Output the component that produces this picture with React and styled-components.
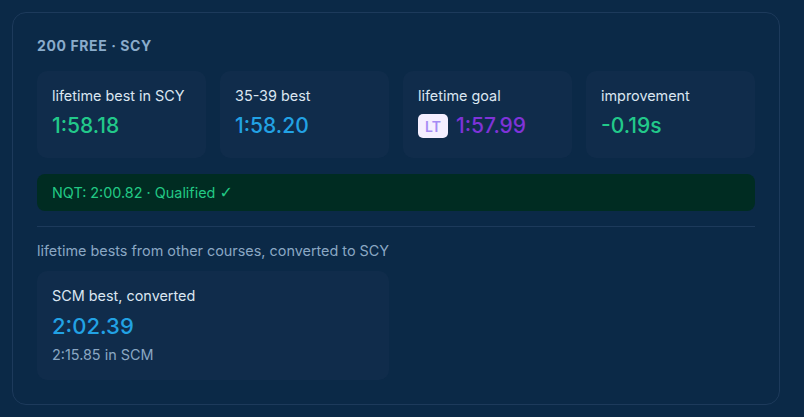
import React from "react";
import styled, { createGlobalStyle } from "styled-components";

const GlobalStyle = createGlobalStyle`
  body {
    margin: 0;
    background: #0b2947;
    font-family: Inter, "Noto Sans", sans-serif;
  }
`;

const stats = [
  { label: "lifetime best in SCY", value: "1:58.18", color: "#22c98a" },
  { label: "35-39 best", value: "1:58.20", color: "#22a2e4" },
  { label: "lifetime goal", value: "1:57.99", color: "#7f33d8", badge: "LT" },
  { label: "improvement", value: "-0.19s", color: "#22c98a" },
];

const App = () => {
  return (
    <>
      <GlobalStyle />
      <Panel>
        <Title>200 FREE · SCY</Title>
        <StatGrid>
          {stats.map((s) => (
            <StatCard key={s.label}>
              <Label>{s.label}</Label>
              <ValueRow>
                {s.badge && <Badge>{s.badge}</Badge>}
                <Value color={s.color}>{s.value}</Value>
              </ValueRow>
            </StatCard>
          ))}
        </StatGrid>
        <Qualified>
          NQT: 2:00.82 · Qualified <Check>✓</Check>
        </Qualified>
        <Divider />
        <SubTitle>lifetime bests from other courses, converted to SCY</SubTitle>
        <StatGrid>
          <StatCard $span={2} $tall>
            <Label>SCM best, converted</Label>
            <Value color="#22a2e4" $big>2:02.39</Value>
            <Note>2:15.85 in SCM</Note>
          </StatCard>
        </StatGrid>
      </Panel>
    </>
  );
};

const Panel = styled.div`
  margin: 12px;
  width: 768px;
  box-sizing: border-box;
  padding: 24px;
  border: 1px solid #1d3a5b;
  border-radius: 14px;
  background: #0b2947;
`;

const Title = styled.div`
  font-size: 14px;
  line-height: 18px;
  font-weight: 700;
  letter-spacing: 0.6px;
  color: #8aaccb;
  margin-bottom: 16px;
`;

const StatGrid = styled.div`
  display: grid;
  grid-template-columns: repeat(4, 1fr);
  gap: 14px;
`;

const StatCard = styled.div`
  grid-column: span ${(p) => p.$span || 1};
  background: #102c4b;
  border-radius: 10px;
  padding: ${(p) => (p.$tall ? "15px 15px 16px" : "15px 15px 17px")};
  display: flex;
  flex-direction: column;
  gap: 5px;
`;

const Label = styled.div`
  font-size: 14.4px;
  line-height: 20px;
  color: #dbe6f1;
`;

const ValueRow = styled.div`
  display: flex;
  align-items: center;
  gap: 8px;
`;

const Value = styled.div`
  font-size: ${(p) => (p.$big ? "22px" : "21px")};
  line-height: 30px;
  font-weight: 500;
  color: ${(p) => p.color};
`;

const Badge = styled.span`
  display: inline-flex;
  align-items: center;
  justify-content: center;
  width: 30px;
  height: 24px;
  border-radius: 5px;
  background: #f4efff;
  color: #a58bf4;
  font-size: 14px;
  font-weight: 600;
`;

const Note = styled.div`
  font-size: 14.4px;
  line-height: 18px;
  color: #8aa7c3;
`;

const Qualified = styled.div`
  margin-top: 16px;
  height: 37px;
  box-sizing: border-box;
  background: #002c22;
  border-radius: 8px;
  padding: 9px 15px;
  font-size: 14.4px;
  line-height: 19px;
  color: #22c985;
`;

const Check = styled.span`
  font-family: "DejaVu Sans", sans-serif;
  font-size: 16px;
  line-height: 0;
`;

const Divider = styled.div`
  height: 1px;
  background: #1d3a5b;
  margin: 15px 0 14px;
`;

const SubTitle = styled.div`
  font-size: 14.4px;
  line-height: 20px;
  color: #8aa7c3;
  margin-bottom: 10px;
`;

export default App;
